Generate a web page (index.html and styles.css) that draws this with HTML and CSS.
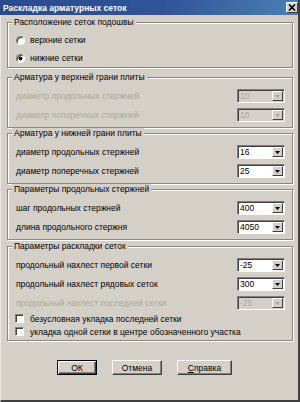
FILE: index.html
```html
<!DOCTYPE html>
<html lang="ru">
<head>
    <meta charset="UTF-8">
    <title>Раскладка арматурных сеток</title>
    <link rel="stylesheet" href="styles.css">
</head>
<body>
    <div class="window">
        <div class="titlebar">
            <span class="title">Раскладка арматурных сеток</span>
            <span class="close">
                <svg width="8" height="7" viewBox="0 0 8 7"><path d="M1 0.5 L7 6.5 M7 0.5 L1 6.5" stroke="#000" stroke-width="1.6"/></svg>
            </span>
        </div>

        <div class="content">
            <div class="group group-place">
                <span class="group-title">Расположение сеток подошвы</span>
                <div class="option"><span class="radio"></span>верхние сетки</div>
                <div class="option"><span class="radio checked"></span>нижние сетки</div>
            </div>

            <div class="group group-top">
                <span class="group-title">Арматура у верхней грани плиты</span>
                <div class="row disabled">
                    <span>диаметр продольных стержней</span>
                    <span class="combo"><span class="combo-value">10</span><span class="combo-btn"><svg width="5" height="3" viewBox="0 0 5 3"><path d="M0 0 H5 L2.5 3 Z"/></svg></span></span>
                </div>
                <div class="row disabled">
                    <span>диаметр поперечных стержней</span>
                    <span class="combo"><span class="combo-value">10</span><span class="combo-btn"><svg width="5" height="3" viewBox="0 0 5 3"><path d="M0 0 H5 L2.5 3 Z"/></svg></span></span>
                </div>
            </div>

            <div class="group">
                <span class="group-title">Арматура у нижней грани плиты</span>
                <div class="row">
                    <span>диаметр продольных стержней</span>
                    <span class="combo"><span class="combo-value">16</span><span class="combo-btn"><svg width="5" height="3" viewBox="0 0 5 3"><path d="M0 0 H5 L2.5 3 Z"/></svg></span></span>
                </div>
                <div class="row">
                    <span>диаметр поперечных стержней</span>
                    <span class="combo"><span class="combo-value">25</span><span class="combo-btn"><svg width="5" height="3" viewBox="0 0 5 3"><path d="M0 0 H5 L2.5 3 Z"/></svg></span></span>
                </div>
            </div>

            <div class="group">
                <span class="group-title">Параметры продольных стержней</span>
                <div class="row">
                    <span>шаг продольных стержней</span>
                    <span class="combo"><span class="combo-value">400</span><span class="combo-btn"><svg width="5" height="3" viewBox="0 0 5 3"><path d="M0 0 H5 L2.5 3 Z"/></svg></span></span>
                </div>
                <div class="row">
                    <span>длина продольного стержня</span>
                    <span class="combo"><span class="combo-value">4050</span><span class="combo-btn"><svg width="5" height="3" viewBox="0 0 5 3"><path d="M0 0 H5 L2.5 3 Z"/></svg></span></span>
                </div>
            </div>

            <div class="group group-layout">
                <span class="group-title">Параметры раскладки сеток</span>
                <div class="row">
                    <span>продольный нахлест первой сетки</span>
                    <span class="combo"><span class="combo-value">-25</span><span class="combo-btn"><svg width="5" height="3" viewBox="0 0 5 3"><path d="M0 0 H5 L2.5 3 Z"/></svg></span></span>
                </div>
                <div class="row">
                    <span>продольный нахлест рядовых сеток</span>
                    <span class="combo"><span class="combo-value">300</span><span class="combo-btn"><svg width="5" height="3" viewBox="0 0 5 3"><path d="M0 0 H5 L2.5 3 Z"/></svg></span></span>
                </div>
                <div class="row disabled">
                    <span>продольный нахлест последней сетки</span>
                    <span class="combo"><span class="combo-value">-25</span><span class="combo-btn"><svg width="5" height="3" viewBox="0 0 5 3"><path d="M0 0 H5 L2.5 3 Z"/></svg></span></span>
                </div>
                <div class="check-row"><span class="checkbox"></span>безусловная укладка последней сетки</div>
                <div class="check-row"><span class="checkbox"></span>укладка одной сетки в центре обозначенного участка</div>
            </div>

            <div class="actions">
                <button class="btn btn-default btn-ok">ОК</button>
                <button class="btn btn-cancel">Отмена</button>
                <button class="btn btn-help"><u>С</u>правка</button>
            </div>
        </div>
    </div>
</body>
</html>
```

FILE: styles.css
```css
body {
    margin: 0;
    font-family: 'Liberation Sans', Arial, sans-serif;
    font-size: 8.5px;
    color: #000;
    background: #d4d0c8;
}
.window {
    width: 300px;
    height: 402px;
    box-sizing: border-box;
    background: #d4d0c8;
    border-style: solid;
    border-width: 0 2px 2px 1px;
    border-color: #d4d0c8 #404040 #404040 #ece9e2;
    display: flex;
    flex-direction: column;
}
.titlebar {
    height: 15px;
    flex: none;
    display: flex;
    align-items: center;
    justify-content: space-between;
    padding: 0 0 0 3px;
    margin-left: -1px;
    background: linear-gradient(90deg, #2a4a8e 0%, #30549a 55%, #4a80b2 100%);
}
.title {
    color: #fff;
    font-weight: bold;
    font-size: 8.5px;
}
.close {
    width: 12px;
    height: 11px;
    box-sizing: border-box;
    display: flex;
    align-items: center;
    justify-content: center;
    background: #d4d0c8;
    border: 1px solid;
    border-color: #fff #404040 #404040 #fff;
}
.content {
    flex: 1;
    padding: 7px 5px 0 6px;
    display: flex;
    flex-direction: column;
}
.group {
    position: relative;
    border: 1px solid #8a8780;
    box-shadow: inset 1px 1px 0 #fff, 1px 1px 0 #fff;
    padding: 8px 7px 3px 8px;
    margin-bottom: 5px;
}
.group-place {
    padding-bottom: 0;
    margin-bottom: 9px;
}
.group-layout {
    margin-top: 1px;
    padding-bottom: 2px;
}
.group-title {
    position: absolute;
    top: -6px;
    left: 4px;
    padding: 0 2px;
    line-height: 11px;
    background: #d4d0c8;
}
.option {
    height: 18px;
    display: flex;
    align-items: center;
}
.radio {
    width: 9px;
    height: 9px;
    box-sizing: border-box;
    border-radius: 50%;
    border: 1px solid;
    border-color: #808080 #fff #fff #808080;
    box-shadow: inset 1px 1px 0 #404040;
    background: #fff;
    margin-right: 5px;
}
.radio.checked {
    background: radial-gradient(circle, #000 0 1.7px, #fff 2.2px);
}
.row {
    height: 19px;
    display: flex;
    align-items: center;
    justify-content: space-between;
}
.row.disabled {
    color: #aca899;
}
.combo {
    width: 48px;
    height: 14px;
    box-sizing: border-box;
    display: flex;
    align-items: center;
    background: #fff;
    border: 1px solid;
    border-color: #808080 #fff #fff #808080;
    box-shadow: inset 1px 1px 0 #404040;
    padding: 1px 1px 0 2px;
    color: #000;
}
.row.disabled .combo {
    background: #d4d0c8;
    color: #aca899;
}
.combo-value {
    flex: 1;
}
.combo-btn {
    width: 11px;
    height: 10px;
    box-sizing: border-box;
    display: flex;
    align-items: center;
    justify-content: center;
    background: #d4d0c8;
    border: 1px solid;
    border-color: #fff #404040 #404040 #fff;
    fill: #000;
}
.row.disabled .combo-btn {
    fill: #aca899;
}
.check-row {
    height: 13px;
    display: flex;
    align-items: center;
}
.checkbox {
    width: 9px;
    height: 9px;
    box-sizing: border-box;
    border: 1px solid;
    border-color: #808080 #fff #fff #808080;
    box-shadow: inset 1px 1px 0 #404040;
    background: #fff;
    margin: 0 6px 0 -1px;
}
.actions {
    display: flex;
    gap: 15px;
    padding-left: 50px;
    margin-top: 14px;
}
.btn {
    height: 15px;
    padding: 0;
    font-family: inherit;
    font-size: 8.5px;
    color: #000;
    background: #d4d0c8;
    border: 1px solid;
    border-color: #fff #404040 #404040 #fff;
    box-shadow: inset -1px -1px 0 #808080;
}
.btn-default {
    border-color: #000;
    box-shadow: inset 1px 1px 0 #fff, inset -1px -1px 0 #404040, inset -2px -2px 0 #808080;
}
.btn-ok {
    width: 40px;
}
.btn-cancel {
    width: 50px;
}
.btn-help {
    width: 55px;
}
```
